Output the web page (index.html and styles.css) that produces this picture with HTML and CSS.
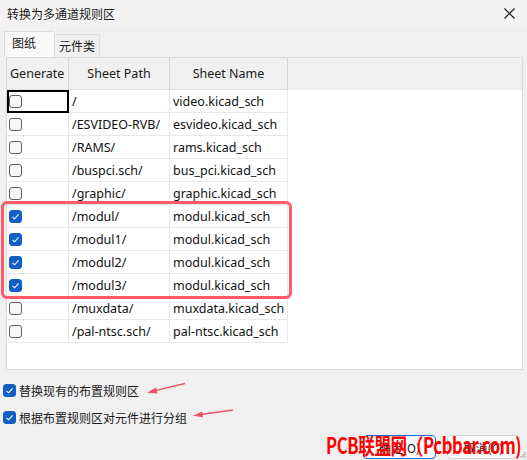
FILE: index.html
```html
<!DOCTYPE html>
<html lang="zh-CN">
<head>
  <meta charset="UTF-8"/>
  <title>转换为多通道规则区</title>
  <link rel="stylesheet" href="styles.css">
</head>
<body>
  <div class="dialog">
    <!-- TITLE BAR -->
    <div class="titlebar">
      <span class="title">转换为多通道规则区</span>
      <svg class="close" width="11" height="11" viewBox="0 0 11 11">
        <path d="M0.5 0.5 L10.5 10.5 M10.5 0.5 L0.5 10.5" stroke="#1a1a1a" stroke-width="1.2"/>
      </svg>
    </div>

    <!-- TABS -->
    <div class="tabs">
      <div class="tab active">图纸</div>
      <div class="tab">元件类</div>
    </div>

    <!-- SHEET LIST -->
    <div class="panel">
      <div class="grid">
        <div class="hcell">Generate</div>
        <div class="hcell center">Sheet Path</div>
        <div class="hcell center">Sheet Name</div>
        <div class="hfill"></div>

        <div class="cell focus"><span class="cb"></span></div>
        <div class="cell">/</div>
        <div class="cell">video.kicad_sch</div>
        <div></div>

        <div class="cell"><span class="cb"></span></div>
        <div class="cell">/ESVIDEO-RVB/</div>
        <div class="cell">esvideo.kicad_sch</div>
        <div></div>

        <div class="cell"><span class="cb"></span></div>
        <div class="cell">/RAMS/</div>
        <div class="cell">rams.kicad_sch</div>
        <div></div>

        <div class="cell"><span class="cb"></span></div>
        <div class="cell">/buspci.sch/</div>
        <div class="cell">bus_pci.kicad_sch</div>
        <div></div>

        <div class="cell"><span class="cb"></span></div>
        <div class="cell">/graphic/</div>
        <div class="cell">graphic.kicad_sch</div>
        <div></div>

        <div class="cell"><span class="cb on"></span></div>
        <div class="cell">/modul/</div>
        <div class="cell">modul.kicad_sch</div>
        <div></div>

        <div class="cell"><span class="cb on"></span></div>
        <div class="cell">/modul1/</div>
        <div class="cell">modul.kicad_sch</div>
        <div></div>

        <div class="cell"><span class="cb on"></span></div>
        <div class="cell">/modul2/</div>
        <div class="cell">modul.kicad_sch</div>
        <div></div>

        <div class="cell"><span class="cb on"></span></div>
        <div class="cell">/modul3/</div>
        <div class="cell">modul.kicad_sch</div>
        <div></div>

        <div class="cell"><span class="cb"></span></div>
        <div class="cell">/muxdata/</div>
        <div class="cell">muxdata.kicad_sch</div>
        <div></div>

        <div class="cell"><span class="cb"></span></div>
        <div class="cell">/pal-ntsc.sch/</div>
        <div class="cell">pal-ntsc.kicad_sch</div>
        <div></div>
      </div>
    </div>

    <!-- OPTIONS -->
    <div class="options">
      <label class="option"><span class="cb on"></span>替换现有的布置规则区</label>
      <label class="option"><span class="cb on"></span>根据布置规则区对元件进行分组</label>
    </div>

    <!-- BUTTONS -->
    <div class="buttons">
      <div class="btn default">确定(O)</div>
      <div class="btn">取消(C)</div>
    </div>

    <!-- ANNOTATIONS -->
    <div class="highlight"></div>
    <svg class="arrows" width="527" height="460" viewBox="0 0 527 460">
      <path d="M185 383.5 L151 391.6" stroke="#f25068" stroke-width="1.3" fill="none"/>
      <path d="M147 392.7 L156 387.6 L157.5 393.6 Z" fill="#f25068"/>
      <path d="M233 410 L197 415" stroke="#f25068" stroke-width="1.3" fill="none"/>
      <path d="M193 415.7 L202 411.5 L203 417.3 Z" fill="#f25068"/>
    </svg>
    <div class="watermark">PCB联盟网（Pcbbar.com)</div>
    <svg class="grip" width="6" height="6" viewBox="0 0 6 6">
      <rect x="4" y="0" width="1.5" height="1.5" fill="#b0b0b0"/>
      <rect x="2" y="2" width="1.5" height="1.5" fill="#b0b0b0"/>
      <rect x="4" y="2" width="1.5" height="1.5" fill="#b0b0b0"/>
      <rect x="0" y="4" width="1.5" height="1.5" fill="#b0b0b0"/>
      <rect x="2" y="4" width="1.5" height="1.5" fill="#b0b0b0"/>
      <rect x="4" y="4" width="1.5" height="1.5" fill="#b0b0b0"/>
    </svg>
  </div>
</body>
</html>
```

FILE: styles.css
```css
/* RESET */
* {
  margin: 0;
  padding: 0;
  box-sizing: border-box;
}

html, body {
  width: 527px;
  height: 460px;
  overflow: hidden;
  background: #f0f0f0;
  font-family: "Noto Sans", "Noto Sans CJK SC", sans-serif;
  font-size: 12px;
  color: #1a1a1a;
}

.dialog {
  position: relative;
  width: 527px;
  height: 460px;
}

/* TITLE BAR */
.titlebar {
  height: 27px;
  background: #f3f3f3;
  display: flex;
  align-items: center;
  justify-content: space-between;
  padding: 0 12px 0 7px;
}

.title {
  font-family: "Noto Sans CJK SC", sans-serif;
  font-size: 12px;
  color: #1a1a1a;
}

/* TABS */
.tabs {
  display: flex;
  align-items: flex-end;
  height: 30px;
  padding: 5px 0 0 4px;
}

.tab {
  font-family: "Noto Sans CJK SC", sans-serif;
  height: 23px;
  padding: 0 4px;
  line-height: 22px;
  background: #f0f0f0;
  border: 1px solid #dcdcdc;
  border-bottom: none;
}

.tab.active {
  height: 26px;
  width: 50px;
  padding: 0 7px;
  background: #f9f9f9;
  border-right: none;
  position: relative;
  z-index: 1;
}

/* PANEL */
.panel {
  margin: 0 4px 0 6px;
  height: 313px;
  background: #fff;
  border: 1px solid #dadada;
}

.grid {
  display: grid;
  grid-template-columns: 62px 101px 118px 1fr;
  grid-template-rows: 32px repeat(11, 23px);
}

.hcell {
  background: #f0f0f0;
  border-right: 1px solid #d5d5d5;
  border-bottom: 1px solid #e2e2e2;
  display: flex;
  align-items: center;
  padding-left: 3px;
  font-size: 12.5px;
}

.hcell.center {
  justify-content: center;
  padding-left: 0;
}

.hfill {
  background: #f0f0f0;
  border-bottom: 1px solid #f0f0f0;
}

.cell {
  border-right: 1px solid #e8e8e8;
  border-bottom: 1px solid #e8e8e8;
  display: flex;
  align-items: center;
  padding-left: 3px;
  font-size: 12.5px;
  color: #111;
}

.cell.focus {
  outline: 2px solid #000;
  outline-offset: -2px;
}

/* CHECKBOXES */
.cb {
  display: inline-block;
  width: 13px;
  height: 13px;
  border: 1px solid #5f5f5f;
  border-radius: 3px;
  background: #f7f7f7;
  margin-left: -1px;
  flex-shrink: 0;
}

.cb.on {
  border-color: #0f5fc4;
  background: #0f5fc4 url("data:image/svg+xml;utf8,<svg xmlns='http://www.w3.org/2000/svg' width='11' height='11' viewBox='0 0 11 11'><path d='M2.5 5.8 L4.6 7.8 L8.6 3.4' stroke='white' stroke-width='1.1' fill='none'/></svg>") center no-repeat;
}

/* OPTIONS */
.options {
  padding: 11px 0 0 3px;
  display: flex;
  flex-direction: column;
  gap: 8px;
}

.option {
  display: flex;
  align-items: center;
  height: 19px;
  gap: 3px;
  font-family: "Noto Sans CJK SC", sans-serif;
  font-size: 12px;
}

.option .cb {
  margin-left: 0;
}

/* BUTTONS */
.buttons {
  display: flex;
  justify-content: flex-end;
  gap: 11px;
  padding: 8px 7px 0 0;
}

.btn {
  width: 73px;
  height: 24px;
  background: #fbfbfb;
  border: 1px solid #d0d0d0;
  border-radius: 4px;
  font-family: "Noto Sans CJK SC", sans-serif;
  font-size: 12px;
  display: flex;
  align-items: center;
  justify-content: center;
}

.btn.default {
  border-color: #1a6ccf;
}

/* ANNOTATIONS (drawn over the dialog) */
.highlight {
  position: absolute;
  left: 1px;
  top: 201px;
  width: 291px;
  height: 98px;
  border: 3px solid #ff5a6b;
  border-radius: 6px;
}

.arrows {
  position: absolute;
  left: 0;
  top: 0;
}

.watermark {
  position: absolute;
  left: 326px;
  top: 430px;
  font-family: "Noto Sans CJK SC", sans-serif;
  font-weight: 700;
  font-size: 22px;
  letter-spacing: -0.5px;
  color: #ff0000;
  line-height: 28px;
  white-space: nowrap;
  transform: scaleX(0.755);
  transform-origin: left center;
}

.grip {
  position: absolute;
  right: 1px;
  bottom: 2px;
}
```
